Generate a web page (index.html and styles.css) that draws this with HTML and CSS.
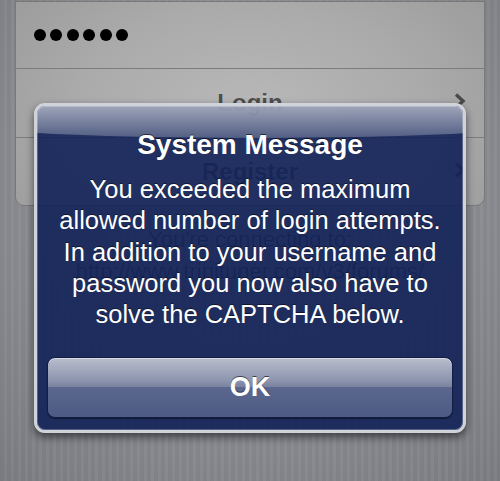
FILE: index.html
```html
<!DOCTYPE html>
<html>
<head>
<meta charset="utf-8">
<link rel="stylesheet" href="styles.css">
</head>
<body>
<div class="screen">
  <div class="group">
    <div class="row pw">
      <span class="dot"></span><span class="dot"></span><span class="dot"></span><span class="dot"></span><span class="dot"></span><span class="dot"></span>
    </div>
    <div class="row action">
      <span class="label">Login</span>
      <svg class="chev" width="12" height="16" viewBox="0 0 12 16"><polyline points="2,1.5 9,8 2,14.5" fill="none" stroke="#4a4a4a" stroke-width="3.4"/></svg>
    </div>
    <div class="row action">
      <span class="label">Register</span>
      <svg class="chev" width="12" height="16" viewBox="0 0 12 16"><polyline points="2,1.5 9,8 2,14.5" fill="none" stroke="#4a4a4a" stroke-width="3.4"/></svg>
    </div>
  </div>
  <p class="footer">You're connecting to:<br>http://www.trinituner.com/v3/forums/</p>
  <div class="alert">
    <div class="gloss"></div>
    <h2 class="title">System Message</h2>
    <p class="msg">You exceeded the maximum<br>allowed number of login attempts.<br>In addition to your username and<br>password you now also have to<br>solve the CAPTCHA below.</p>
    <div class="ok">OK</div>
  </div>
</div>
</body>
</html>
```

FILE: styles.css
```css
html, body {
  margin: 0;
  padding: 0;
}
body {
  width: 500px;
  height: 481px;
  overflow: hidden;
  font-family: "Liberation Sans", Arial, sans-serif;
}
.screen {
  position: relative;
  width: 500px;
  height: 481px;
  overflow: hidden;
  padding-top: 1px;
  box-sizing: border-box;
  background:
    repeating-linear-gradient(90deg, rgba(0,0,0,0.025) 0px, rgba(0,0,0,0.025) 4px, rgba(255,255,255,0.03) 4px, rgba(255,255,255,0.03) 7px),
    radial-gradient(circle farthest-corner at 50% 40%, #989a9f 0%, #8b8d92 55%, #7b7d82 100%);
}
.group {
  margin: 0 15px;
  border: 1px solid #797979;
  border-radius: 0 0 9px 9px;
  overflow: hidden;
  background: radial-gradient(ellipse 300px 190px at 50% 115px, #b9b9b9 0%, #aaaaaa 60%, #9c9c9c 100%);
}
.row {
  display: flex;
  align-items: center;
  height: 67px;
  border-bottom: 1px solid #7c7c7c;
  box-sizing: border-box;
}
.row:nth-child(2) {
  height: 69px;
}
.row:last-child {
  border-bottom: none;
  height: 67px;
}
.pw {
  padding-left: 18px;
  gap: 4.4px;
}
.dot {
  width: 12px;
  height: 12px;
  border-radius: 50%;
  background: #000;
}
.action {
  position: relative;
  justify-content: center;
}
.label {
  font-weight: bold;
  font-size: 24px;
  color: #4e4e4e;
  text-shadow: 0 1px 0 rgba(255,255,255,0.5);
}
.chev {
  position: absolute;
  right: 18px;
  top: 50%;
  margin-top: -10px;
}
.footer {
  margin: 18px 0 0;
  text-align: center;
  font-size: 22px;
  line-height: 32px;
  color: #3a4152;
  text-shadow: 0 1px 0 rgba(255,255,255,0.4);
}
.alert {
  position: absolute;
  left: 34px;
  top: 103px;
  width: 432px;
  height: 330px;
  box-sizing: border-box;
  border: 3px solid #d0d3da;
  border-radius: 11px;
  background: rgba(18, 34, 88, 0.9);
  box-shadow: 0 4px 8px rgba(0,0,0,0.55), inset 0 0 0 1px rgba(255,255,255,0.25);
  padding: 23px 10px 12px;
  overflow: hidden;
  color: #fff;
  text-align: center;
}
.gloss {
  position: absolute;
  left: -216px;
  top: -42px;
  width: 864px;
  height: 74px;
  border-radius: 50%;
  background: linear-gradient(to bottom, rgba(255,255,255,0.62) 50%, rgba(255,255,255,0.22) 100%);
}
.title {
  position: relative;
  margin: 0;
  font-size: 28px;
  line-height: 32px;
  font-weight: bold;
  text-shadow: 0 -1px 0 rgba(0,0,0,0.6);
}
.msg {
  position: relative;
  margin: 13px 0 0;
  font-size: 25.5px;
  line-height: 31.3px;
  text-shadow: 0 -1px 0 rgba(0,0,0,0.5);
}
.ok {
  position: relative;
  margin-top: 27px;
  height: 61px;
  box-sizing: border-box;
  border: 1px solid #121c44;
  border-radius: 8px;
  background: linear-gradient(#b9becd 0%, #8c95ae 38%, #79839f 49%, #5b678e 50%, #4d5a83 100%);
  box-shadow: inset 0 1px 0 rgba(255,255,255,0.45), 0 1px 1px rgba(0,0,0,0.45);
  font-size: 27px;
  font-weight: bold;
  line-height: 59px;
  text-shadow: 0 -1px 0 rgba(0,0,0,0.6);
}
```
